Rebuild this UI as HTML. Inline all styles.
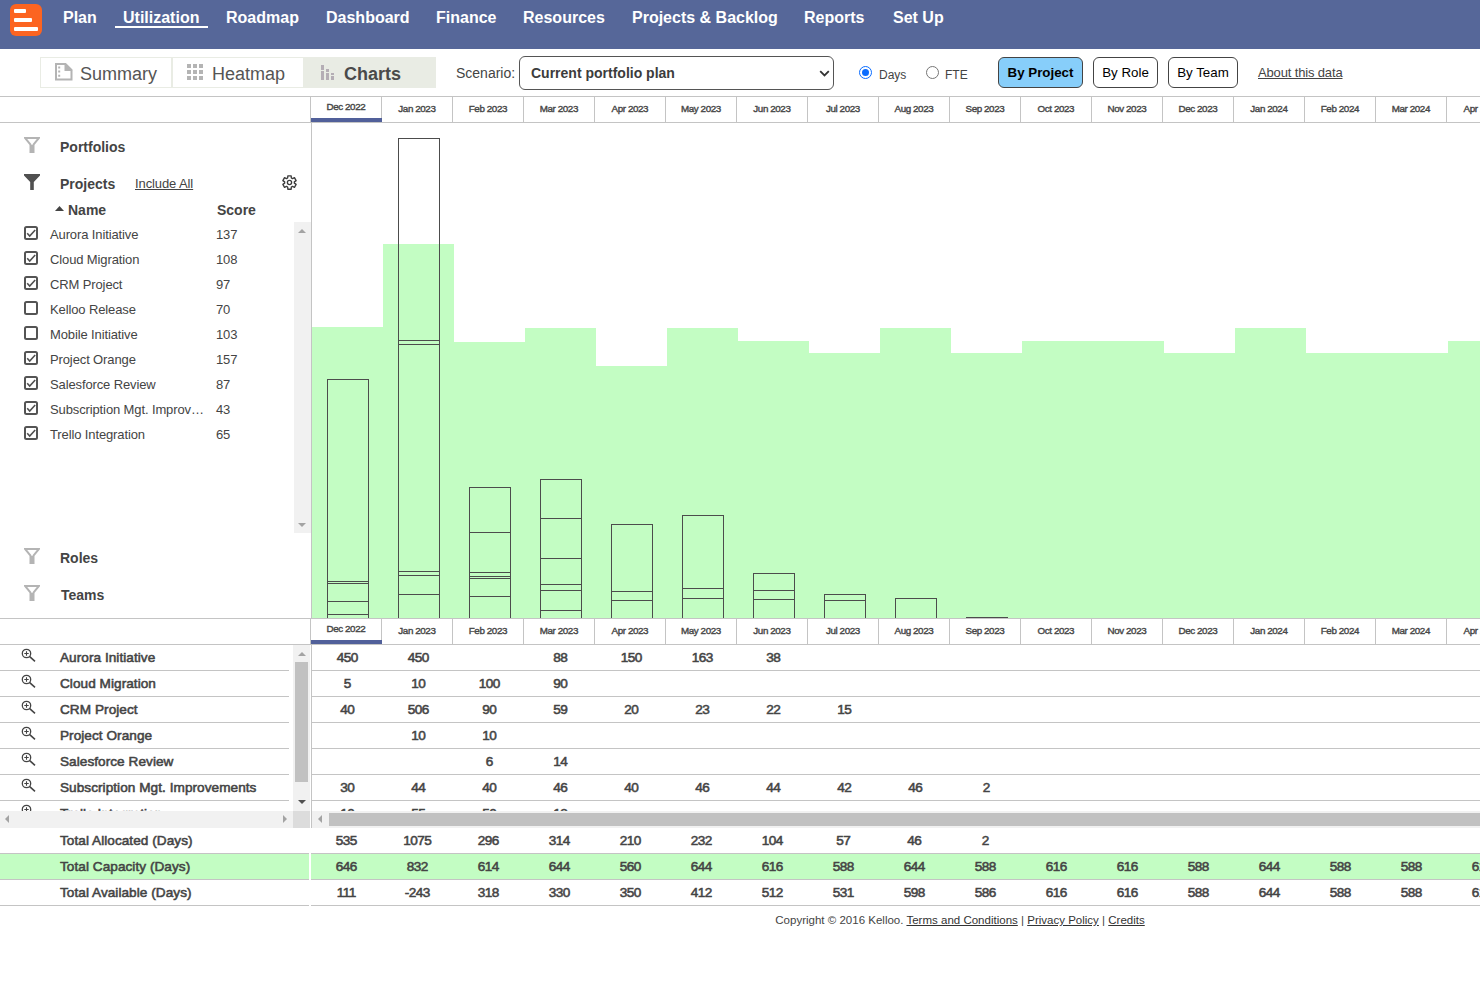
<!DOCTYPE html>
<html lang="en"><head><meta charset="utf-8"><title>Kelloo - Utilization Charts</title>
<style>
*{box-sizing:border-box;margin:0;padding:0}
html,body{width:1480px;height:987px;overflow:hidden;background:#fff}
body{font-family:"Liberation Sans",Arial,sans-serif;color:#444;position:relative;font-size:14px}
.abs{position:absolute}
#nav{position:absolute;left:0;top:0;width:1480px;height:49px;background:#566799}
#nav a{position:absolute;top:8px;height:20px;line-height:20px;font-size:16px;font-weight:bold;color:#fff;white-space:nowrap;text-decoration:none}
#nav a.sel{border-bottom:2px solid #fff;padding:0 9px 0 8px;}
.logo{position:absolute;left:10px;top:4px;width:32px;height:32px;border-radius:6px;background:#fc6421}
.logo i{position:absolute;left:3.5px;height:4.4px;background:#fff;border-radius:1px}
.tab{position:absolute;top:57px;height:31px;border:1px solid #e9ece4;font-size:18px;line-height:31px;color:#555;white-space:nowrap}
.tab span{position:absolute;top:1px}
.btn{position:absolute;top:57px;height:31px;border:1px solid #444;border-radius:6px;font-size:13.333px;line-height:29px;text-align:center;color:#000;background:#fff;white-space:nowrap}
.hl{position:absolute;height:1px;background:#c4c4c4}
.vl{position:absolute;width:1px;background:#c4c4c4}
.mh{position:absolute;width:71px;text-align:center;font-size:9.8px;font-weight:normal;-webkit-text-stroke:0.4px #484848;color:#484848;white-space:nowrap;line-height:12px;letter-spacing:-0.4px}
.ft{position:absolute;left:24px;width:16px;height:16px}
.fl{position:absolute;left:60px;font-size:14px;font-weight:bold;color:#444;line-height:16px;white-space:nowrap}
.pr{position:absolute;left:0;height:25px;width:294px;font-size:13px;letter-spacing:-0.12px;line-height:16px;color:#444}
.pr .cb{position:absolute;left:24px;top:5px;width:14px;height:14px;border:2px solid #545454;border-radius:2.5px;background:#fff}
.pr .nm{position:absolute;left:50px;top:6px;white-space:nowrap}
.pr .sc{position:absolute;left:216px;top:6px}
.tr{position:absolute;font-size:13.6px;font-weight:normal;-webkit-text-stroke:0.55px #444;color:#444;line-height:16px;white-space:nowrap;letter-spacing:0.05px}
.num{position:absolute;width:71px;text-align:center;font-size:13.6px;font-weight:normal;-webkit-text-stroke:0.55px #444;color:#444;line-height:16px;white-space:nowrap;letter-spacing:-0.6px;text-indent:-0.6px}
.mag{position:absolute;left:21px;width:16px;height:16px}
#foot{position:absolute;left:660px;width:600px;top:912px;text-align:center;font-size:11.53px;line-height:16px;color:#444;white-space:nowrap}
#foot u{color:#333}
</style></head><body>

<div id="nav"><div class="logo"><i style="top:4.5px;width:12.2px"></i><i style="top:13.8px;width:18.2px"></i><i style="top:23.1px;width:24.7px"></i></div>
<a style="left:63px">Plan</a>
<a class="sel" style="left:115px">Utilization</a>
<a style="left:226px">Roadmap</a>
<a style="left:326px">Dashboard</a>
<a style="left:436px">Finance</a>
<a style="left:523px">Resources</a>
<a style="left:632px">Projects &amp; Backlog</a>
<a style="left:804px">Reports</a>
<a style="left:893px">Set Up</a>
</div>
<div class="tab" style="left:40px;width:132px"><svg class="abs" style="left:13px;top:4px" width="19" height="20" viewBox="0 0 19 20"><path d="M2 2h9.5l6 6v9.6h-15.5z" fill="none" stroke="#b4b4b4" stroke-width="2"/><path d="M10.5 1v8h8z" fill="#b4b4b4"/><path d="M4.2 4.4h2v2h-2zM4.2 8.6h2v2h-2zM4.2 12.8h2v2h-2z" fill="#b4b4b4"/></svg><span style="left:39px">Summary</span></div>
<div class="tab" style="left:172px;width:132px"><svg class="abs" style="left:14px;top:6px" width="17" height="17" viewBox="0 0 17 17" fill="#b4b4b4"><rect x="0" y="0" width="4" height="4"/><rect x="6" y="0" width="4" height="4"/><rect x="12" y="0" width="4" height="4"/><rect x="0" y="6" width="4" height="4"/><rect x="6" y="6" width="4" height="4"/><rect x="12" y="6" width="4" height="4"/><rect x="0" y="12" width="4" height="4"/><rect x="6" y="12" width="4" height="4"/><rect x="12" y="12" width="4" height="4"/></svg><span style="left:39px">Heatmap</span></div>
<div class="tab" style="left:303px;width:133px;background:#e9ece4;font-weight:bold;color:#4a4a4a"><svg class="abs" style="left:17px;top:7px" width="14" height="16" viewBox="0 0 14 16" fill="#b5aeb5"><rect x="0" y="0" width="3" height="5"/><rect x="0" y="6" width="3" height="9"/><rect x="5" y="4" width="3" height="3"/><rect x="5" y="8" width="3" height="7"/><rect x="10" y="8" width="3" height="2"/><rect x="10" y="11" width="3" height="4"/></svg><span style="left:40px">Charts</span></div>

<div class="abs" style="left:456px;top:65px;font-size:14px;line-height:16px;color:#444">Scenario:</div>
<div class="abs" style="left:519px;top:56px;width:315px;height:34px;border:1px solid #555;border-radius:6px;background:#fff"><span class="abs" style="left:11px;top:8px;font-size:14px;font-weight:bold;line-height:16px;color:#3c3c3c;white-space:nowrap">Current portfolio plan</span><svg class="abs" style="left:299px;top:13px" width="11" height="7" viewBox="0 0 11 7"><path d="M1.2 1.2l4.3 4.3l4.3-4.3" fill="none" stroke="#333" stroke-width="1.8"/></svg></div>
<div class="abs" style="left:859px;top:66px;width:13px;height:13px;border-radius:50%;border:1.5px solid #0a6cff;background:#fff"><i class="abs" style="left:1.5px;top:1.5px;width:7px;height:7px;border-radius:50%;background:#0a6cff"></i></div>
<div class="abs" style="left:879px;top:67px;font-size:12px;line-height:16px;color:#444">Days</div>
<div class="abs" style="left:926px;top:66px;width:13px;height:13px;border-radius:50%;border:1px solid #767676;background:#fff"></div>
<div class="abs" style="left:945px;top:67px;font-size:12px;line-height:16px;color:#444">FTE</div>
<div class="btn" style="left:998px;width:85px;background:#87cefa;font-weight:bold">By Project</div>
<div class="btn" style="left:1093px;width:65px">By Role</div>
<div class="btn" style="left:1168px;width:70px">By Team</div>
<div class="abs" style="left:1258px;top:65px;font-size:13px;letter-spacing:-0.15px;line-height:16px;color:#444;text-decoration:underline;white-space:nowrap">About this data</div>
<div class="hl" style="left:0;top:96px;width:1480px"></div>
<div class="hl" style="left:0;top:122px;width:1480px"></div>
<div class="vl" style="left:310px;top:96px;height:26px"></div>
<div class="mh" style="left:310.4px;top:101px">Dec 2022</div>
<div class="vl" style="left:381px;top:96px;height:26px"></div>
<div class="mh" style="left:381.4px;top:103px">Jan 2023</div>
<div class="vl" style="left:452px;top:96px;height:26px"></div>
<div class="mh" style="left:452.4px;top:103px">Feb 2023</div>
<div class="vl" style="left:523px;top:96px;height:26px"></div>
<div class="mh" style="left:523.4px;top:103px">Mar 2023</div>
<div class="vl" style="left:594px;top:96px;height:26px"></div>
<div class="mh" style="left:594.4px;top:103px">Apr 2023</div>
<div class="vl" style="left:665px;top:96px;height:26px"></div>
<div class="mh" style="left:665.4px;top:103px">May 2023</div>
<div class="vl" style="left:736px;top:96px;height:26px"></div>
<div class="mh" style="left:736.4px;top:103px">Jun 2023</div>
<div class="vl" style="left:807px;top:96px;height:26px"></div>
<div class="mh" style="left:807.4px;top:103px">Jul 2023</div>
<div class="vl" style="left:878px;top:96px;height:26px"></div>
<div class="mh" style="left:878.4px;top:103px">Aug 2023</div>
<div class="vl" style="left:949px;top:96px;height:26px"></div>
<div class="mh" style="left:949.4px;top:103px">Sep 2023</div>
<div class="vl" style="left:1020px;top:96px;height:26px"></div>
<div class="mh" style="left:1020.4px;top:103px">Oct 2023</div>
<div class="vl" style="left:1091px;top:96px;height:26px"></div>
<div class="mh" style="left:1091.4px;top:103px">Nov 2023</div>
<div class="vl" style="left:1162px;top:96px;height:26px"></div>
<div class="mh" style="left:1162.4px;top:103px">Dec 2023</div>
<div class="vl" style="left:1233px;top:96px;height:26px"></div>
<div class="mh" style="left:1233.4px;top:103px">Jan 2024</div>
<div class="vl" style="left:1304px;top:96px;height:26px"></div>
<div class="mh" style="left:1304.4px;top:103px">Feb 2024</div>
<div class="vl" style="left:1375px;top:96px;height:26px"></div>
<div class="mh" style="left:1375.4px;top:103px">Mar 2024</div>
<div class="vl" style="left:1446px;top:96px;height:26px"></div>
<div class="mh" style="left:1446.4px;top:103px">Apr 2024</div>
<div class="abs" style="left:311px;top:118px;width:71px;height:4px;background:#51609a"></div>
<svg class="abs" style="left:0;top:123px" width="1480" height="495" viewBox="0 123 1480 495" shape-rendering="crispEdges">
<rect x="312" y="327" width="71" height="291" fill="#c3fdc3"/>
<rect x="383" y="244" width="71" height="374" fill="#c3fdc3"/>
<rect x="454" y="342" width="71" height="276" fill="#c3fdc3"/>
<rect x="525" y="328" width="71" height="290" fill="#c3fdc3"/>
<rect x="596" y="366" width="71" height="252" fill="#c3fdc3"/>
<rect x="667" y="328" width="71" height="290" fill="#c3fdc3"/>
<rect x="738" y="341" width="71" height="277" fill="#c3fdc3"/>
<rect x="809" y="353" width="71" height="265" fill="#c3fdc3"/>
<rect x="880" y="328" width="71" height="290" fill="#c3fdc3"/>
<rect x="951" y="353" width="71" height="265" fill="#c3fdc3"/>
<rect x="1022" y="341" width="71" height="277" fill="#c3fdc3"/>
<rect x="1093" y="341" width="71" height="277" fill="#c3fdc3"/>
<rect x="1164" y="353" width="71" height="265" fill="#c3fdc3"/>
<rect x="1235" y="328" width="71" height="290" fill="#c3fdc3"/>
<rect x="1306" y="353" width="71" height="265" fill="#c3fdc3"/>
<rect x="1377" y="353" width="71" height="265" fill="#c3fdc3"/>
<rect x="1448" y="341" width="71" height="277" fill="#c3fdc3"/>
<rect x="311" y="123" width="1" height="495" fill="#c4c4c4"/>
<g fill="#4c4c4c">
<rect x="327" y="379" width="1" height="239"/><rect x="368" y="379" width="1" height="239"/>
<rect x="327" y="379" width="42" height="1"/>
<rect x="327" y="581" width="42" height="1"/>
<rect x="327" y="583" width="42" height="1"/>
<rect x="327" y="601" width="42" height="1"/>
<rect x="327" y="614" width="42" height="1"/>
<rect x="398" y="138" width="1" height="480"/><rect x="439" y="138" width="1" height="480"/>
<rect x="398" y="138" width="42" height="1"/>
<rect x="398" y="340" width="42" height="1"/>
<rect x="398" y="344" width="42" height="1"/>
<rect x="398" y="571" width="42" height="1"/>
<rect x="398" y="575" width="42" height="1"/>
<rect x="398" y="594" width="42" height="1"/>
<rect x="469" y="487" width="1" height="131"/><rect x="510" y="487" width="1" height="131"/>
<rect x="469" y="487" width="42" height="1"/>
<rect x="469" y="532" width="42" height="1"/>
<rect x="469" y="572" width="42" height="1"/>
<rect x="469" y="576" width="42" height="1"/>
<rect x="469" y="578" width="42" height="1"/>
<rect x="469" y="596" width="42" height="1"/>
<rect x="540" y="479" width="1" height="139"/><rect x="581" y="479" width="1" height="139"/>
<rect x="540" y="479" width="42" height="1"/>
<rect x="540" y="518" width="42" height="1"/>
<rect x="540" y="558" width="42" height="1"/>
<rect x="540" y="584" width="42" height="1"/>
<rect x="540" y="590" width="42" height="1"/>
<rect x="540" y="610" width="42" height="1"/>
<rect x="611" y="524" width="1" height="94"/><rect x="652" y="524" width="1" height="94"/>
<rect x="611" y="524" width="42" height="1"/>
<rect x="611" y="591" width="42" height="1"/>
<rect x="611" y="600" width="42" height="1"/>
<rect x="682" y="515" width="1" height="103"/><rect x="723" y="515" width="1" height="103"/>
<rect x="682" y="515" width="42" height="1"/>
<rect x="682" y="588" width="42" height="1"/>
<rect x="682" y="598" width="42" height="1"/>
<rect x="753" y="573" width="1" height="45"/><rect x="794" y="573" width="1" height="45"/>
<rect x="753" y="573" width="42" height="1"/>
<rect x="753" y="590" width="42" height="1"/>
<rect x="753" y="599" width="42" height="1"/>
<rect x="824" y="594" width="1" height="24"/><rect x="865" y="594" width="1" height="24"/>
<rect x="824" y="594" width="42" height="1"/>
<rect x="824" y="600" width="42" height="1"/>
<rect x="895" y="598" width="1" height="20"/><rect x="936" y="598" width="1" height="20"/>
<rect x="895" y="598" width="42" height="1"/>
<rect x="966" y="617" width="42" height="1"/>
</g>
</svg>
<div class="hl" style="left:0;top:618px;width:1480px"></div>
<div class="hl" style="left:0;top:644px;width:1480px"></div>
<div class="vl" style="left:310px;top:618px;height:26px"></div>
<div class="mh" style="left:310.4px;top:623px">Dec 2022</div>
<div class="vl" style="left:381px;top:618px;height:26px"></div>
<div class="mh" style="left:381.4px;top:625px">Jan 2023</div>
<div class="vl" style="left:452px;top:618px;height:26px"></div>
<div class="mh" style="left:452.4px;top:625px">Feb 2023</div>
<div class="vl" style="left:523px;top:618px;height:26px"></div>
<div class="mh" style="left:523.4px;top:625px">Mar 2023</div>
<div class="vl" style="left:594px;top:618px;height:26px"></div>
<div class="mh" style="left:594.4px;top:625px">Apr 2023</div>
<div class="vl" style="left:665px;top:618px;height:26px"></div>
<div class="mh" style="left:665.4px;top:625px">May 2023</div>
<div class="vl" style="left:736px;top:618px;height:26px"></div>
<div class="mh" style="left:736.4px;top:625px">Jun 2023</div>
<div class="vl" style="left:807px;top:618px;height:26px"></div>
<div class="mh" style="left:807.4px;top:625px">Jul 2023</div>
<div class="vl" style="left:878px;top:618px;height:26px"></div>
<div class="mh" style="left:878.4px;top:625px">Aug 2023</div>
<div class="vl" style="left:949px;top:618px;height:26px"></div>
<div class="mh" style="left:949.4px;top:625px">Sep 2023</div>
<div class="vl" style="left:1020px;top:618px;height:26px"></div>
<div class="mh" style="left:1020.4px;top:625px">Oct 2023</div>
<div class="vl" style="left:1091px;top:618px;height:26px"></div>
<div class="mh" style="left:1091.4px;top:625px">Nov 2023</div>
<div class="vl" style="left:1162px;top:618px;height:26px"></div>
<div class="mh" style="left:1162.4px;top:625px">Dec 2023</div>
<div class="vl" style="left:1233px;top:618px;height:26px"></div>
<div class="mh" style="left:1233.4px;top:625px">Jan 2024</div>
<div class="vl" style="left:1304px;top:618px;height:26px"></div>
<div class="mh" style="left:1304.4px;top:625px">Feb 2024</div>
<div class="vl" style="left:1375px;top:618px;height:26px"></div>
<div class="mh" style="left:1375.4px;top:625px">Mar 2024</div>
<div class="vl" style="left:1446px;top:618px;height:26px"></div>
<div class="mh" style="left:1446.4px;top:625px">Apr 2024</div>
<div class="abs" style="left:311px;top:640px;width:71px;height:4px;background:#51609a"></div>
<svg class="ft" style="top:137px" viewBox="0 0 16 16"><path d="M1 1h14l-5.5 6.5v7.5h-3v-7.5z" fill="none" stroke="#b4b4b4" stroke-width="2" stroke-linejoin="miter"/><rect x="6.5" y="8" width="3" height="7" fill="#b4b4b4"/></svg>
<div class="fl" style="top:139px">Portfolios</div>
<svg class="ft" style="top:174px" viewBox="0 0 16 16"><path d="M0 0h16v1.5l-6.2 6.5v8h-3.6v-8l-6.2-6.5z" fill="#505050"/></svg>
<div class="fl" style="top:176px">Projects</div>
<div class="abs" style="left:135px;top:176px;font-size:13px;letter-spacing:-0.1px;line-height:16px;text-decoration:underline;color:#444;white-space:nowrap">Include All</div>
<svg class="abs" style="left:281px;top:173.6px" width="17" height="17" viewBox="-8.5 -8.5 17 17"><path d="M1.84 -4.54L1.67 -6.70L-1.67 -6.70L-1.84 -4.54L-3.02 -3.86L-4.96 -4.79L-6.63 -1.90L-4.85 -0.68L-4.85 0.68L-6.63 1.90L-4.96 4.79L-3.02 3.86L-1.84 4.54L-1.67 6.70L1.67 6.70L1.84 4.54L3.02 3.86L4.96 4.79L6.63 1.90L4.85 0.68L4.85 -0.68L6.63 -1.90L4.96 -4.79L3.02 -3.86Z" fill="none" stroke="#3c3c3c" stroke-width="1.35" stroke-linejoin="round"/><circle cx="0" cy="0" r="2.1" fill="none" stroke="#3c3c3c" stroke-width="1.35"/></svg>
<svg class="abs" style="left:55px;top:206px" width="9" height="5" viewBox="0 0 9 5"><path d="M0 5l4.5-5l4.5 5z" fill="#444"/></svg>
<div class="fl" style="left:68px;top:202px">Name</div><div class="fl" style="left:217px;top:202px">Score</div>
<div class="pr" style="top:221px"><div class="cb"><svg class="abs" style="left:0;top:0" width="10" height="10" viewBox="0 0 10 10"><path d="M1.2 5.3L3.7 8L9.2 2" fill="none" stroke="#505050" stroke-width="1.6"/></svg></div><span class="nm">Aurora Initiative</span><span class="sc">137</span></div>
<div class="pr" style="top:246px"><div class="cb"><svg class="abs" style="left:0;top:0" width="10" height="10" viewBox="0 0 10 10"><path d="M1.2 5.3L3.7 8L9.2 2" fill="none" stroke="#505050" stroke-width="1.6"/></svg></div><span class="nm">Cloud Migration</span><span class="sc">108</span></div>
<div class="pr" style="top:271px"><div class="cb"><svg class="abs" style="left:0;top:0" width="10" height="10" viewBox="0 0 10 10"><path d="M1.2 5.3L3.7 8L9.2 2" fill="none" stroke="#505050" stroke-width="1.6"/></svg></div><span class="nm">CRM Project</span><span class="sc">97</span></div>
<div class="pr" style="top:296px"><div class="cb"></div><span class="nm">Kelloo Release</span><span class="sc">70</span></div>
<div class="pr" style="top:321px"><div class="cb"></div><span class="nm">Mobile Initiative</span><span class="sc">103</span></div>
<div class="pr" style="top:346px"><div class="cb"><svg class="abs" style="left:0;top:0" width="10" height="10" viewBox="0 0 10 10"><path d="M1.2 5.3L3.7 8L9.2 2" fill="none" stroke="#505050" stroke-width="1.6"/></svg></div><span class="nm">Project Orange</span><span class="sc">157</span></div>
<div class="pr" style="top:371px"><div class="cb"><svg class="abs" style="left:0;top:0" width="10" height="10" viewBox="0 0 10 10"><path d="M1.2 5.3L3.7 8L9.2 2" fill="none" stroke="#505050" stroke-width="1.6"/></svg></div><span class="nm">Salesforce Review</span><span class="sc">87</span></div>
<div class="pr" style="top:396px"><div class="cb"><svg class="abs" style="left:0;top:0" width="10" height="10" viewBox="0 0 10 10"><path d="M1.2 5.3L3.7 8L9.2 2" fill="none" stroke="#505050" stroke-width="1.6"/></svg></div><span class="nm">Subscription Mgt. Improv…</span><span class="sc">43</span></div>
<div class="pr" style="top:421px"><div class="cb"><svg class="abs" style="left:0;top:0" width="10" height="10" viewBox="0 0 10 10"><path d="M1.2 5.3L3.7 8L9.2 2" fill="none" stroke="#505050" stroke-width="1.6"/></svg></div><span class="nm">Trello Integration</span><span class="sc">65</span></div>
<div class="abs" style="left:294px;top:222px;width:17px;height:311px;background:#f1f1f1"></div>
<svg class="abs" style="left:298px;top:229px" width="8" height="4" viewBox="0 0 8 4"><path d="M0 4l4-4l4 4z" fill="#a3a3a3"/></svg>
<svg class="abs" style="left:298px;top:523px" width="8" height="4" viewBox="0 0 8 4"><path d="M0 0l4 4l4-4z" fill="#a3a3a3"/></svg>
<svg class="ft" style="top:548px" viewBox="0 0 16 16"><path d="M1 1h14l-5.5 6.5v7.5h-3v-7.5z" fill="none" stroke="#b4b4b4" stroke-width="2" stroke-linejoin="miter"/><rect x="6.5" y="8" width="3" height="7" fill="#b4b4b4"/></svg>
<div class="fl" style="top:550px">Roles</div>
<svg class="ft" style="top:585px" viewBox="0 0 16 16"><path d="M1 1h14l-5.5 6.5v7.5h-3v-7.5z" fill="none" stroke="#b4b4b4" stroke-width="2" stroke-linejoin="miter"/><rect x="6.5" y="8" width="3" height="7" fill="#b4b4b4"/></svg>
<div class="fl" style="top:587px;left:61px">Teams</div>
<div class="abs" style="left:0;top:645px;width:1480px;height:166px;overflow:hidden">
<svg class="mag" style="top:3px" viewBox="0 0 16 16"><circle cx="5.5" cy="5.5" r="4.2" fill="none" stroke="#444" stroke-width="1.3"/><path d="M8.7 8.7l5.3 4.6" stroke="#444" stroke-width="1.6"/><path d="M3.3 5.5h4.4M5.5 3.3v4.4" stroke="#444" stroke-width="1.1"/></svg>
<div class="tr" style="left:60px;top:5px">Aurora Initiative</div>
<div class="num" style="left:312px;top:5px">450</div>
<div class="num" style="left:383px;top:5px">450</div>
<div class="num" style="left:525px;top:5px">88</div>
<div class="num" style="left:596px;top:5px">150</div>
<div class="num" style="left:667px;top:5px">163</div>
<div class="num" style="left:738px;top:5px">38</div>
<div class="hl" style="left:0;top:25px;width:289px"></div><div class="hl" style="left:312px;top:25px;width:1168px"></div>
<svg class="mag" style="top:29px" viewBox="0 0 16 16"><circle cx="5.5" cy="5.5" r="4.2" fill="none" stroke="#444" stroke-width="1.3"/><path d="M8.7 8.7l5.3 4.6" stroke="#444" stroke-width="1.6"/><path d="M3.3 5.5h4.4M5.5 3.3v4.4" stroke="#444" stroke-width="1.1"/></svg>
<div class="tr" style="left:60px;top:31px">Cloud Migration</div>
<div class="num" style="left:312px;top:31px">5</div>
<div class="num" style="left:383px;top:31px">10</div>
<div class="num" style="left:454px;top:31px">100</div>
<div class="num" style="left:525px;top:31px">90</div>
<div class="hl" style="left:0;top:51px;width:289px"></div><div class="hl" style="left:312px;top:51px;width:1168px"></div>
<svg class="mag" style="top:55px" viewBox="0 0 16 16"><circle cx="5.5" cy="5.5" r="4.2" fill="none" stroke="#444" stroke-width="1.3"/><path d="M8.7 8.7l5.3 4.6" stroke="#444" stroke-width="1.6"/><path d="M3.3 5.5h4.4M5.5 3.3v4.4" stroke="#444" stroke-width="1.1"/></svg>
<div class="tr" style="left:60px;top:57px">CRM Project</div>
<div class="num" style="left:312px;top:57px">40</div>
<div class="num" style="left:383px;top:57px">506</div>
<div class="num" style="left:454px;top:57px">90</div>
<div class="num" style="left:525px;top:57px">59</div>
<div class="num" style="left:596px;top:57px">20</div>
<div class="num" style="left:667px;top:57px">23</div>
<div class="num" style="left:738px;top:57px">22</div>
<div class="num" style="left:809px;top:57px">15</div>
<div class="hl" style="left:0;top:77px;width:289px"></div><div class="hl" style="left:312px;top:77px;width:1168px"></div>
<svg class="mag" style="top:81px" viewBox="0 0 16 16"><circle cx="5.5" cy="5.5" r="4.2" fill="none" stroke="#444" stroke-width="1.3"/><path d="M8.7 8.7l5.3 4.6" stroke="#444" stroke-width="1.6"/><path d="M3.3 5.5h4.4M5.5 3.3v4.4" stroke="#444" stroke-width="1.1"/></svg>
<div class="tr" style="left:60px;top:83px">Project Orange</div>
<div class="num" style="left:383px;top:83px">10</div>
<div class="num" style="left:454px;top:83px">10</div>
<div class="hl" style="left:0;top:103px;width:289px"></div><div class="hl" style="left:312px;top:103px;width:1168px"></div>
<svg class="mag" style="top:107px" viewBox="0 0 16 16"><circle cx="5.5" cy="5.5" r="4.2" fill="none" stroke="#444" stroke-width="1.3"/><path d="M8.7 8.7l5.3 4.6" stroke="#444" stroke-width="1.6"/><path d="M3.3 5.5h4.4M5.5 3.3v4.4" stroke="#444" stroke-width="1.1"/></svg>
<div class="tr" style="left:60px;top:109px">Salesforce Review</div>
<div class="num" style="left:454px;top:109px">6</div>
<div class="num" style="left:525px;top:109px">14</div>
<div class="hl" style="left:0;top:129px;width:289px"></div><div class="hl" style="left:312px;top:129px;width:1168px"></div>
<svg class="mag" style="top:133px" viewBox="0 0 16 16"><circle cx="5.5" cy="5.5" r="4.2" fill="none" stroke="#444" stroke-width="1.3"/><path d="M8.7 8.7l5.3 4.6" stroke="#444" stroke-width="1.6"/><path d="M3.3 5.5h4.4M5.5 3.3v4.4" stroke="#444" stroke-width="1.1"/></svg>
<div class="tr" style="left:60px;top:135px">Subscription Mgt. Improvements</div>
<div class="num" style="left:312px;top:135px">30</div>
<div class="num" style="left:383px;top:135px">44</div>
<div class="num" style="left:454px;top:135px">40</div>
<div class="num" style="left:525px;top:135px">46</div>
<div class="num" style="left:596px;top:135px">40</div>
<div class="num" style="left:667px;top:135px">46</div>
<div class="num" style="left:738px;top:135px">44</div>
<div class="num" style="left:809px;top:135px">42</div>
<div class="num" style="left:880px;top:135px">46</div>
<div class="num" style="left:951px;top:135px">2</div>
<div class="hl" style="left:0;top:155px;width:289px"></div><div class="hl" style="left:312px;top:155px;width:1168px"></div>
<svg class="mag" style="top:159px" viewBox="0 0 16 16"><circle cx="5.5" cy="5.5" r="4.2" fill="none" stroke="#444" stroke-width="1.3"/><path d="M8.7 8.7l5.3 4.6" stroke="#444" stroke-width="1.6"/><path d="M3.3 5.5h4.4M5.5 3.3v4.4" stroke="#444" stroke-width="1.1"/></svg>
<div class="tr" style="left:60px;top:161px">Trello Integration</div>
<div class="num" style="left:312px;top:161px">10</div>
<div class="num" style="left:383px;top:161px">55</div>
<div class="num" style="left:454px;top:161px">50</div>
<div class="num" style="left:525px;top:161px">18</div>
<div class="hl" style="left:0;top:181px;width:289px"></div><div class="hl" style="left:312px;top:181px;width:1168px"></div>
</div>
<div class="vl" style="left:311px;top:645px;height:183px"></div>
<div class="abs" style="left:293px;top:645px;width:17px;height:166px;background:#f1f1f1"></div>
<div class="abs" style="left:295px;top:662px;width:13px;height:120px;background:#c1c1c1"></div>
<svg class="abs" style="left:298px;top:652px" width="8" height="4" viewBox="0 0 8 4"><path d="M0 4l4-4l4 4z" fill="#a3a3a3"/></svg>
<svg class="abs" style="left:298px;top:800px" width="8" height="4" viewBox="0 0 8 4"><path d="M0 0l4 4l4-4z" fill="#505050"/></svg>
<div class="abs" style="left:0;top:811px;width:293px;height:17px;background:#f1f1f1"></div>
<div class="abs" style="left:293px;top:811px;width:17px;height:17px;background:#dcdcdc"></div>
<svg class="abs" style="left:5px;top:815px" width="4" height="8" viewBox="0 0 4 8"><path d="M4 0l-4 4l4 4z" fill="#a3a3a3"/></svg>
<svg class="abs" style="left:283px;top:815px" width="4" height="8" viewBox="0 0 4 8"><path d="M0 0l4 4l-4 4z" fill="#a3a3a3"/></svg>
<div class="abs" style="left:312px;top:811px;width:1168px;height:17px;background:#f1f1f1"></div>
<svg class="abs" style="left:318px;top:815px" width="4" height="8" viewBox="0 0 4 8"><path d="M4 0l-4 4l4 4z" fill="#a3a3a3"/></svg>
<div class="abs" style="left:329px;top:813px;width:1151px;height:13px;background:#c1c1c1"></div>
<div class="abs" style="left:0;top:854px;width:309px;height:25px;background:#c3fdc3"></div><div class="abs" style="left:311px;top:854px;width:1169px;height:25px;background:#c3fdc3"></div>
<div class="hl" style="left:0;top:853px;width:309px"></div><div class="hl" style="left:311px;top:853px;width:1169px"></div>
<div class="hl" style="left:0;top:879px;width:309px"></div><div class="hl" style="left:311px;top:879px;width:1169px"></div>
<div class="hl" style="left:0;top:905px;width:309px"></div><div class="hl" style="left:311px;top:905px;width:1169px"></div>
<div class="tr" style="left:60px;top:833px">Total Allocated (Days)</div>
<div class="num" style="left:311px;top:833px">535</div>
<div class="num" style="left:382px;top:833px">1075</div>
<div class="num" style="left:453px;top:833px">296</div>
<div class="num" style="left:524px;top:833px">314</div>
<div class="num" style="left:595px;top:833px">210</div>
<div class="num" style="left:666px;top:833px">232</div>
<div class="num" style="left:737px;top:833px">104</div>
<div class="num" style="left:808px;top:833px">57</div>
<div class="num" style="left:879px;top:833px">46</div>
<div class="num" style="left:950px;top:833px">2</div>
<div class="tr" style="left:60px;top:859px">Total Capacity (Days)</div>
<div class="num" style="left:311px;top:859px">646</div>
<div class="num" style="left:382px;top:859px">832</div>
<div class="num" style="left:453px;top:859px">614</div>
<div class="num" style="left:524px;top:859px">644</div>
<div class="num" style="left:595px;top:859px">560</div>
<div class="num" style="left:666px;top:859px">644</div>
<div class="num" style="left:737px;top:859px">616</div>
<div class="num" style="left:808px;top:859px">588</div>
<div class="num" style="left:879px;top:859px">644</div>
<div class="num" style="left:950px;top:859px">588</div>
<div class="num" style="left:1021px;top:859px">616</div>
<div class="num" style="left:1092px;top:859px">616</div>
<div class="num" style="left:1163px;top:859px">588</div>
<div class="num" style="left:1234px;top:859px">644</div>
<div class="num" style="left:1305px;top:859px">588</div>
<div class="num" style="left:1376px;top:859px">588</div>
<div class="num" style="left:1447px;top:859px">616</div>
<div class="tr" style="left:60px;top:885px">Total Available (Days)</div>
<div class="num" style="left:311px;top:885px">111</div>
<div class="num" style="left:382px;top:885px">-243</div>
<div class="num" style="left:453px;top:885px">318</div>
<div class="num" style="left:524px;top:885px">330</div>
<div class="num" style="left:595px;top:885px">350</div>
<div class="num" style="left:666px;top:885px">412</div>
<div class="num" style="left:737px;top:885px">512</div>
<div class="num" style="left:808px;top:885px">531</div>
<div class="num" style="left:879px;top:885px">598</div>
<div class="num" style="left:950px;top:885px">586</div>
<div class="num" style="left:1021px;top:885px">616</div>
<div class="num" style="left:1092px;top:885px">616</div>
<div class="num" style="left:1163px;top:885px">588</div>
<div class="num" style="left:1234px;top:885px">644</div>
<div class="num" style="left:1305px;top:885px">588</div>
<div class="num" style="left:1376px;top:885px">588</div>
<div class="num" style="left:1447px;top:885px">616</div>
<div id="foot">Copyright © 2016 Kelloo. <u>Terms and Conditions</u> | <u>Privacy Policy</u> | <u>Credits</u></div>
</body></html>
